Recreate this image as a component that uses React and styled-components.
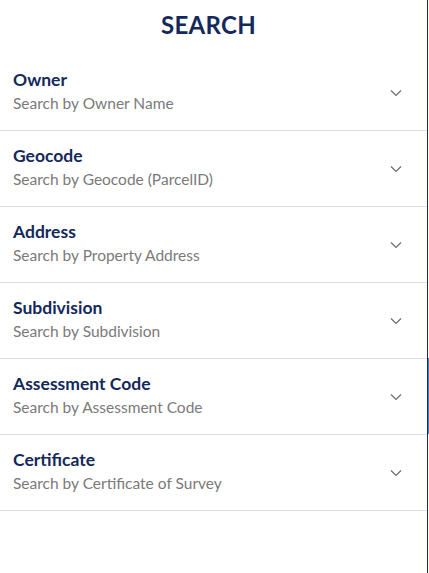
import React from 'react'
import styled, { createGlobalStyle } from 'styled-components'

const GlobalStyle = createGlobalStyle`
  html, body {
    margin: 0;
    padding: 0;
    background: #fff;
  }
  body {
    font-family: Lato, "Noto Sans", sans-serif;
  }
`

const Page = styled.div`
  display: flex;
  width: 429px;
  height: 573px;
  overflow: hidden;
`

const Panel = styled.div`
  width: 427px;
  height: 573px;
  border-right: 1px solid #1b2a55;
  display: flex;
  flex-direction: column;
`

const Title = styled.h1`
  margin: 0;
  height: 55px;
  display: flex;
  align-items: center;
  justify-content: center;
  font-size: 24px;
  font-weight: 700;
  color: #13295b;
  letter-spacing: 0.3px;
  padding: 0 10px 7px 0;
  box-sizing: border-box;
`

const Row = styled.div`
  height: 76px;
  box-sizing: border-box;
  border-bottom: 1px solid #dedede;
  display: flex;
  align-items: center;
  padding: 0 25px 0 13px;
`

const Text = styled.div`
  flex: 1;
  display: flex;
  flex-direction: column;
  gap: 4px;
  margin-top: -2px;
`

const Name = styled.div`
  font-size: 17.5px;
  font-weight: 700;
  color: #13295b;
  line-height: 20px;
`

const Hint = styled.div`
  font-size: 15.5px;
  color: #7a7a7a;
  line-height: 19px;
`

const Scroll = styled.div`
  width: 1px;
  padding-top: 358px;
`

const Thumb = styled.div`
  height: 76px;
  background: #3e85c6;
`

const Chevron = () => (
  <svg width="12" height="8" viewBox="0 0 12 8">
    <path d="M1 1.5l5 5 5-5" fill="none" stroke="#6b6b6b" strokeWidth="1.2" />
  </svg>
)

const items = [
  ['Owner', 'Search by Owner Name'],
  ['Geocode', 'Search by Geocode (ParcelID)'],
  ['Address', 'Search by Property Address'],
  ['Subdivision', 'Search by Subdivision'],
  ['Assessment Code', 'Search by Assessment Code'],
  ['Certificate', 'Search by Certificate of Survey'],
]

const App = () => (
  <Page>
    <GlobalStyle />
    <Panel>
      <Title>SEARCH</Title>
      {items.map(([name, hint]) => (
        <Row key={name}>
          <Text>
            <Name>{name}</Name>
            <Hint>{hint}</Hint>
          </Text>
          <Chevron />
        </Row>
      ))}
    </Panel>
    <Scroll>
      <Thumb />
    </Scroll>
  </Page>
)

export default App
